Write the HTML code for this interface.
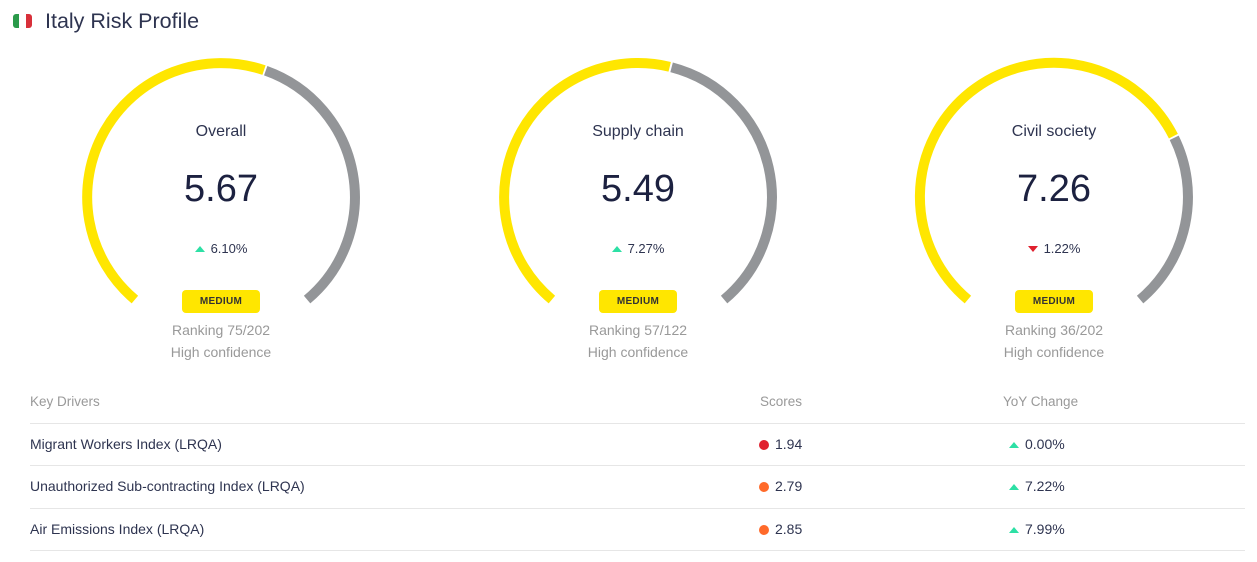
<!DOCTYPE html>
<html><head><meta charset="utf-8"><style>
body{margin:0;width:1257px;height:562px;background:#fff;font-family:"Liberation Sans",sans-serif;position:relative;overflow:hidden;color:#2e3450}
.abs{position:absolute}
.c{position:absolute;text-align:center;width:200px}
.lbl{font-size:16px;color:#2e3450}
.num{font-size:38px;color:#1c2140}
.chg{font-size:13px;color:#2e3450}
.badge{position:absolute;width:78px;height:23px;background:#ffe600;border-radius:4px;font-size:10px;font-weight:bold;line-height:23px;text-align:center;color:#333;letter-spacing:.3px}
.sub{font-size:14px;color:#999;line-height:22px}
.up{display:inline-block;width:0;height:0;border-left:5px solid transparent;border-right:5px solid transparent;border-bottom:6px solid #2de0a5;margin-right:6px;vertical-align:1px}
.dn{display:inline-block;width:0;height:0;border-left:5px solid transparent;border-right:5px solid transparent;border-top:6px solid #e0202e;margin-right:6px;vertical-align:1px}
.hr{position:absolute;left:30px;width:1215px;height:1px;background:#e6e6e6}
.t{position:absolute;font-size:13px;color:#2e3450}
.t.n{font-size:14px;top:0}
.h{position:absolute;font-size:13.5px;color:#999}
.dot{display:inline-block;width:10px;height:10px;border-radius:50%;margin-right:6px;vertical-align:-1px}
</style></head><body>
<div class="abs" style="left:13px;top:14px;width:6px;height:14px;background:#2a9a4a;border-radius:3px 0 0 3px"></div>
<div class="abs" style="left:19px;top:14px;width:7px;height:14px;background:#fff"></div>
<div class="abs" style="left:26px;top:14px;width:6px;height:14px;background:#d8303a;border-radius:0 3px 3px 0"></div>
<div class="abs" style="left:45px;top:9px;font-size:21.5px;color:#2e3450">Italy Risk Profile</div>

<svg class="abs" style="left:0;top:0" width="1257" height="380" fill="none" stroke-width="10">
<path d="M134.9 299.6 A134 134 0 0 1 264 70.1" stroke="#ffe600"/>
<path d="M265.7 70.7 A134 134 0 0 1 307.1 299.6" stroke="#939598"/>
<path d="M551.9 299.6 A134 134 0 0 1 669.7 66.8" stroke="#ffe600"/>
<path d="M671.6 67.3 A134 134 0 0 1 724.1 299.6" stroke="#939598"/>
<path d="M967.9 299.6 A134 134 0 1 1 1173.4 136.2" stroke="#ffe600"/>
<path d="M1174.2 137.8 A134 134 0 0 1 1140.1 299.6" stroke="#939598"/>
</svg>

<div class="c lbl" style="left:121px;top:123px">Overall</div>
<div class="c num" style="left:121px;top:168px">5.67</div>
<div class="c chg" style="left:121px;top:241px"><span class="up"></span>6.10%</div>
<div class="badge" style="left:182px;top:290px">MEDIUM</div>
<div class="c sub" style="left:121px;top:319px">Ranking 75/202<br>High confidence</div>

<div class="c lbl" style="left:538px;top:123px">Supply chain</div>
<div class="c num" style="left:538px;top:168px">5.49</div>
<div class="c chg" style="left:538px;top:241px"><span class="up"></span>7.27%</div>
<div class="badge" style="left:599px;top:290px">MEDIUM</div>
<div class="c sub" style="left:538px;top:319px">Ranking 57/122<br>High confidence</div>

<div class="c lbl" style="left:954px;top:123px">Civil society</div>
<div class="c num" style="left:954px;top:168px">7.26</div>
<div class="c chg" style="left:954px;top:241px"><span class="dn"></span>1.22%</div>
<div class="badge" style="left:1015px;top:290px">MEDIUM</div>
<div class="c sub" style="left:954px;top:319px">Ranking 36/202<br>High confidence</div>

<div class="h" style="left:30px;top:394px">Key Drivers</div>
<div class="h" style="left:760px;top:394px">Scores</div>
<div class="h" style="left:1003px;top:394px">YoY Change</div>
<div class="hr" style="top:423px"></div>
<div class="t" style="left:30px;top:436px;font-size:14px">Migrant Workers Index (LRQA)</div>
<div class="t" style="left:759px;top:436px;font-size:14px"><span class="dot" style="background:#e0202e"></span>1.94</div>
<div class="t" style="left:1009px;top:436px;font-size:14px"><span class="up"></span>0.00%</div>
<div class="hr" style="top:465px"></div>
<div class="t" style="left:30px;top:478px;font-size:14px">Unauthorized Sub-contracting Index (LRQA)</div>
<div class="t" style="left:759px;top:478px;font-size:14px"><span class="dot" style="background:#ff6a2a"></span>2.79</div>
<div class="t" style="left:1009px;top:478px;font-size:14px"><span class="up"></span>7.22%</div>
<div class="hr" style="top:508px"></div>
<div class="t" style="left:30px;top:521px;font-size:14px">Air Emissions Index (LRQA)</div>
<div class="t" style="left:759px;top:521px;font-size:14px"><span class="dot" style="background:#ff6a2a"></span>2.85</div>
<div class="t" style="left:1009px;top:521px;font-size:14px"><span class="up"></span>7.99%</div>
<div class="hr" style="top:550px"></div>
</body></html>
